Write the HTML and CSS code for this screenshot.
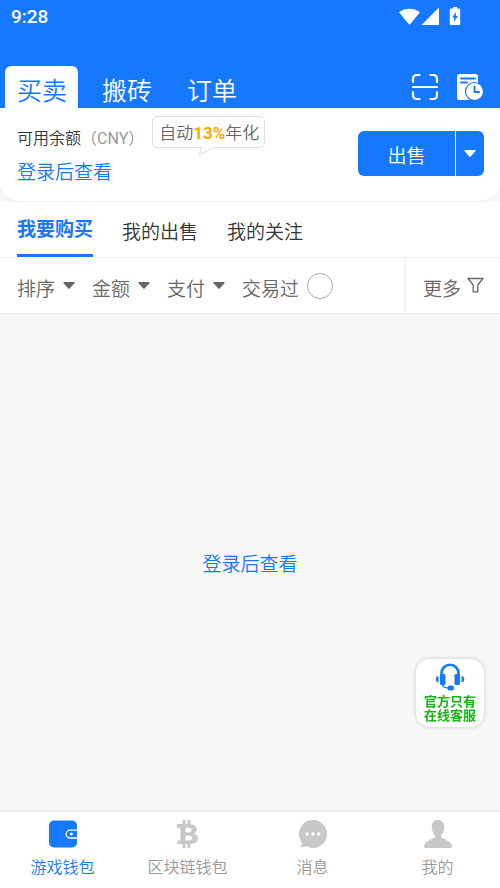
FILE: index.html
```html
<!DOCTYPE html>
<html lang="zh-CN">
<head>
<meta charset="utf-8">
<meta name="viewport" content="width=device-width, initial-scale=1">
<title>买卖</title>
<link rel="stylesheet" href="styles.css">
</head>
<body>
<header class="header">
  <div class="status">
    <span class="status-time">9:28</span>
    <svg class="status-icons" width="64" height="20" viewBox="0 0 64 20" fill="#fff" aria-hidden="true">
      <path d="M0 5.2C6 .6 15 .6 21 5.2L10.500 18Z"/>
      <path d="M40 .5V18H22.500Z"/>
      <path fill-rule="evenodd" d="M54 0h4v1.500h2.200q1 0 1 1V17q0 1-1 1h-8.400q-1 0-1-1V2.500q0-1 1-1H54ZM56.800 5 53.200 10.500h2v4.200L58.800 9h-2Z"/>
    </svg>
  </div>
  <div class="header-bar">
    <nav class="main-tabs">
      <a class="main-tab main-tab-active" href="#trade">买卖</a>
      <a class="main-tab" href="#brick">搬砖</a>
      <a class="main-tab" href="#orders">订单</a>
    </nav>
    <div class="header-actions">
      <button class="icon-button" type="button" aria-label="扫一扫">
        <svg width="28" height="28" viewBox="0 0 28 28" fill="none" stroke="#fff" stroke-width="2.200" stroke-linecap="round">
          <path d="M2 9V6q0-4 4-4h2.500M19.500 2H22q4 0 4 4v3M26 19v3q0 4-4 4h-2.500M8.500 26H6q-4 0-4-4v-3M2 14h24"/>
        </svg>
      </button>
      <button class="icon-button" type="button" aria-label="交易记录">
        <svg width="28" height="28" viewBox="0 0 28 28">
          <rect x="1" y="1" width="21" height="26" rx="2.500" fill="#fff"/>
          <path d="M5 5.500h14M5 9.500h6" stroke="#1677ff" stroke-width="1.800" stroke-linecap="round"/>
          <circle cx="18.500" cy="18.500" r="9.600" fill="#1677ff"/>
          <circle cx="18.500" cy="18.500" r="8.400" fill="#fff"/>
          <path d="M18.500 13.500V19H23" fill="none" stroke="#1677ff" stroke-width="1.800" stroke-linecap="round" stroke-linejoin="round"/>
        </svg>
      </button>
    </div>
  </div>
</header>

<section class="balance">
  <div class="balance-info">
    <div class="balance-label">可用余额<span class="currency">（CNY）</span></div>
    <a class="balance-login" href="#login">登录后查看</a>
  </div>
  <div class="tip">自动<strong class="tip-rate">13%</strong>年化
    <svg class="tip-tail" width="20" height="10" viewBox="0 0 20 10" aria-hidden="true">
      <path d="M4 0 1 7.500 18 0" fill="#fff" stroke="#e0e0e0"/>
    </svg>
  </div>
  <div class="sell">
    <button class="sell-main" type="button">出售</button>
    <button class="sell-more" type="button" aria-label="更多操作">
      <svg width="12" height="7" viewBox="0 0 12 7" fill="#fff"><path d="M1 0h10q1 .5.4 1.200L6.700 6.500q-.7.700-1.400 0L.6 1.200Q0 .5 1 0Z"/></svg>
    </button>
  </div>
</section>

<nav class="sub-tabs">
  <a class="sub-tab sub-tab-active" href="#buy">我要购买</a>
  <a class="sub-tab" href="#sell">我的出售</a>
  <a class="sub-tab" href="#follow">我的关注</a>
</nav>

<div class="filters">
  <div class="filter-list">
    <button class="filter" type="button">排序<svg class="caret" width="12" height="7" viewBox="0 0 12 7"><path d="M1 0h10q1 .5.4 1.200L6.700 6.500q-.7.700-1.400 0L.6 1.200Q0 .5 1 0Z"/></svg></button>
    <button class="filter" type="button">金额<svg class="caret" width="12" height="7" viewBox="0 0 12 7"><path d="M1 0h10q1 .5.4 1.200L6.700 6.500q-.7.700-1.400 0L.6 1.200Q0 .5 1 0Z"/></svg></button>
    <button class="filter" type="button">支付<svg class="caret" width="12" height="7" viewBox="0 0 12 7"><path d="M1 0h10q1 .5.4 1.200L6.700 6.500q-.7.700-1.400 0L.6 1.200Q0 .5 1 0Z"/></svg></button>
    <label class="filter">交易过<input class="traded" type="checkbox"></label>
  </div>
  <button class="filter filter-more" type="button">更多<svg class="funnel" width="17" height="17" viewBox="0 0 17 17" fill="none" stroke="#666" stroke-width="1.300" stroke-linejoin="round"><path d="M1 1.500h15L10.800 8v6.800H6.200V8Z"/></svg></button>
</div>

<main class="content">
  <a class="content-login" href="#login">登录后查看</a>
</main>

<a class="service" href="#service">
  <svg width="30" height="28" viewBox="0 0 30 28" aria-hidden="true">
    <path d="M6.500 12V10.500a8.500 8.800 0 0 1 17 0V12" fill="none" stroke="#1677ff" stroke-width="2.600"/>
    <rect x="5" y="11" width="5.500" height="11" rx="1.500" fill="#1677ff"/>
    <rect x="19.500" y="11" width="5.500" height="11" rx="1.500" fill="#1677ff"/>
    <path d="M3.500 13v6.500a3.300 3.300 0 0 1 0-6.500ZM26.500 13v6.500a3.300 3.300 0 0 0 0-6.500Z" fill="#1677ff"/>
    <path d="M7.500 21q.5 4 5.500 4h2" fill="none" stroke="#1677ff" stroke-width="1.500"/>
    <rect x="12.500" y="22.500" width="6.500" height="5" rx="2.500" fill="#1677ff"/>
  </svg>
  <span class="service-text">官方只有<br>在线客服</span>
</a>

<nav class="bottom-nav">
  <a class="nav-item nav-item-active" href="#game">
    <svg width="28" height="28" viewBox="0 0 28 28" aria-hidden="true">
      <rect y=".5" width="28" height="27" rx="5" fill="#1677ff"/>
      <path d="M28 10.200h-7a3.900 3.900 0 0 0 0 7.800h7" fill="none" stroke="#fff" stroke-width="1.300"/>
      <circle cx="22.300" cy="14.100" r="1.500" fill="#fff"/>
    </svg>
    游戏钱包
  </a>
  <a class="nav-item" href="#chain">
    <svg width="28" height="28" viewBox="0 0 28 28" fill="#c8c8c8" aria-hidden="true">
      <path fill-rule="evenodd" d="M8.500 0h3v4h2V0h3v4.200c4 .5 6.300 2.300 6.300 5.200 0 2-1 3.400-3 4.200 2.700.8 4.200 2.500 4.200 5 0 3.300-2.500 5.200-7.500 5.400v4h-3v-4h-2v4h-3v-4H3l.8-3.500h1.400q1.300 0 1.300-1.300V9q0-1.300-1.300-1.300H3V4h5.500ZM11.500 7.800v4.700h2.200c2.600 0 3.800-.7 3.800-2.400s-1.200-2.300-3.800-2.300Zm0 8v4.700h2.500c2.800 0 4.100-.7 4.100-2.400s-1.300-2.300-4.100-2.300Z"/>
    </svg>
    区块链钱包
  </a>
  <a class="nav-item" href="#message">
    <svg width="28" height="28" viewBox="0 0 28 28" aria-hidden="true">
      <path d="M14 0a14 14 0 1 1-7 26.100Q4.500 27.500 1.500 27 3 25 2.700 22.300A14 14 0 0 1 14 0Z" fill="#c8c8c8"/>
      <g fill="#fff"><circle cx="8.200" cy="14" r="1.700"/><circle cx="14" cy="14" r="1.700"/><circle cx="19.800" cy="14" r="1.700"/></g>
    </svg>
    消息
  </a>
  <a class="nav-item" href="#mine">
    <svg width="28" height="28" viewBox="0 0 28 28" fill="#c8c8c8" aria-hidden="true">
      <path d="M14 0c3.900 0 6.300 2.700 6.300 7 0 3.500-1.300 6.300-3.200 8.200v1.800c0 1 6 2.800 9 5.500 1.200 1 1.900 2.300 1.900 3.800 0 1-.6 1.700-1.700 1.700H1.700C.6 28 0 27.300 0 26.300c0-1.500.7-2.800 1.900-3.800 3-2.700 9-4.500 9-5.500v-1.800C9 13.300 7.700 10.500 7.700 7c0-4.300 2.400-7 6.300-7Z"/>
    </svg>
    我的
  </a>
</nav>
</body>
</html>
```
FILE: styles.css
```css
* {
  box-sizing: border-box;
}

body {
  display: flex;
  flex-direction: column;
  min-height: 100vh;
  margin: 0;
  background: #f7f7f7;
  color: #333;
  font-family: Roboto, "Noto Sans CJK SC", sans-serif;
  font-size: 19px;
  font-weight: 350;
  line-height: 28px;
}

a {
  color: inherit;
  text-decoration: none;
}

button {
  padding: 0;
  border: 0;
  background: none;
  color: inherit;
  font: inherit;
}

svg {
  display: block;
  flex: none;
}

.header {
  background: #1677ff;
  color: #fff;
}

.status {
  display: flex;
  justify-content: space-between;
  padding: 7px 37px 0 11px;
  line-height: 20px;
}

.status-time {
  font-size: 19px;
  font-weight: 500;
}

.header-bar {
  display: flex;
  justify-content: space-between;
  margin-top: 39px;
  padding: 0 16px 0 5px;
}

.main-tabs {
  display: flex;
  gap: 12px;
}

.main-tab {
  padding: 10px 11px 0 12px;
  border-radius: 6px 6px 0 0;
  font-size: 25px;
  line-height: 32px;
}

.main-tab-active {
  background: #fff;
  color: #1677ff;
}

.header-actions {
  display: flex;
  align-items: center;
  gap: 17px;
}

.balance {
  display: flex;
  align-items: flex-start;
  padding: 8px 16px 12px 17px;
  border-radius: 0 0 20px 20px;
  border-bottom: 1px solid #f0f0f0;
  background: #fff;
}

.balance-info {
  padding-top: 9px;
}

.balance-label {
  font-size: 16px;
}

.currency {
  color: #999;
  font-weight: 400;
}

.balance-login {
  display: block;
  margin-top: 4px;
  color: #1677ff;
  line-height: 32px;
}

.tip {
  position: relative;
  margin-left: 8px;
  padding: 2px 5px 0 6px;
  border: 1px solid #e0e0e0;
  border-radius: 5px;
  color: #666;
  font-size: 17px;
}

.tip-rate {
  color: #ffa800;
  font-weight: 700;
}

.tip-tail {
  position: absolute;
  top: 100%;
  left: 45px;
}

.sell {
  display: flex;
  gap: 1px;
  margin: 15px 0 0 auto;
  border-radius: 6px;
  overflow: hidden;
  color: #fff;
}

.sell-main,
.sell-more {
  height: 45px;
  background: #1677ff;
}

.sell-main {
  width: 97px;
  padding-top: 6px;
}

.sell-more {
  display: flex;
  align-items: center;
  justify-content: center;
  width: 28px;
}

.sub-tabs {
  display: flex;
  gap: 29px;
  padding: 0 17px;
  border-bottom: 1px solid #f2f2f2;
  background: #fff;
}

.sub-tab {
  padding: 17px 0 7px;
  border-bottom: 3px solid transparent;
}

.sub-tab-active {
  padding: 14px 0 10px;
  border-color: #1677ff;
  color: #1677ff;
  font-weight: 700;
}

.filters {
  display: flex;
  justify-content: space-between;
  border-bottom: 1px solid #f0f0f0;
  background: #fff;
  color: #666;
}

.filter-list {
  display: flex;
  gap: 17px;
  padding-left: 17px;
}

.filter {
  display: flex;
  align-items: center;
  gap: 8px;
  height: 55px;
  padding-top: 8px;
}

.caret {
  margin-bottom: 9px;
  fill: #666;
}

.traded {
  appearance: none;
  width: 26px;
  height: 26px;
  margin: 0 0 7px;
  border: 1px solid #aaa;
  border-radius: 50%;
  background: #fff;
}

.filter-more {
  gap: 6px;
  padding-right: 16px;
  padding-left: 17px;
  border-left: 2px solid #f5f5f5;
}

.funnel {
  margin-bottom: 8px;
}

.content {
  display: flex;
  flex: 1;
  align-items: center;
  justify-content: center;
  padding-top: 6px;
}

.content-login {
  color: #1677ff;
}

.service {
  position: fixed;
  right: 16px;
  bottom: 161px;
  display: flex;
  flex-direction: column;
  align-items: center;
  gap: 4px;
  padding: 4px 8px;
  border-radius: 14px;
  background: #fff;
  box-shadow: 0 0 4px rgba(0, 0, 0, 0.2);
}

.service-text {
  color: #12b812;
  font-size: 13px;
  font-weight: 700;
  line-height: 14px;
}

.bottom-nav {
  display: grid;
  grid-template-columns: repeat(4, 1fr);
  padding: 8px 0 6px;
  border-top: 2px solid #ebebeb;
  background: #fff;
  color: #999;
}

.nav-item {
  display: flex;
  flex-direction: column;
  align-items: center;
  gap: 6px;
  font-size: 16px;
}

.nav-item-active {
  color: #1677ff;
}
```
